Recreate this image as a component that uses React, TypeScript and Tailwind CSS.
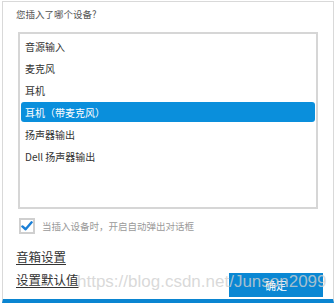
import React from "react";

const devices = ["音源输入", "麦克风", "耳机", "耳机（带麦克风）", "扬声器输出", "Dell 扬声器输出"];

export default function App() {
  const selected = 3;
  const font = { fontFamily: '"Noto Sans CJK SC", "Liberation Sans", sans-serif' };

  return (
    <div className="relative w-[336px] h-[304px] bg-white overflow-hidden" style={font}>
      <div className="ml-[2px] mt-[1px] w-[332px] h-[302px] border border-[#d9d9d9] border-b-[4px] border-b-[#0a85d1] flex flex-col">
        {/* Title */}
        <div className="mt-[6px] pl-[13px] text-[9.5px] leading-[12px] text-[#555]">您插入了哪个设备?</div>

        {/* Device list */}
        <div className="mt-[12px] ml-[15px] w-[300px] h-[177px] border-2 border-[#d6d6d6] bg-white pt-px">
          {devices.map((d, i) => (
            <div key={d} className="h-[22px] px-px py-px">
              <div
                className={
                  i === selected
                    ? "h-full rounded-[3px] bg-[#0a8fdc] text-white flex items-center pl-[4px] text-[10px]"
                    : "h-full flex items-center pl-[4px] text-[10px] text-[#333]"
                }
              >
                {d}
              </div>
            </div>
          ))}
        </div>

        {/* Auto popup checkbox */}
        <div className="mt-[9px] ml-[16px] flex items-center gap-[7px]">
          <div className="w-[16px] h-[16px] border-2 border-[#cfcfcf] bg-white flex items-center justify-center">
            <svg width="13" height="12" viewBox="0 0 13 12">
              <path d="M1.5 6.5 L5 9.5 L11.5 2" fill="none" stroke="#1a7fd6" strokeWidth="2.6" strokeLinecap="round" strokeLinejoin="round" />
            </svg>
          </div>
          <span className="text-[9.5px] text-[#9a9a9a] leading-[12px]">当插入设备时，开启自动弹出对话框</span>
        </div>

        {/* Links */}
        <div className="mt-[15px] ml-[13px] text-[12.5px] leading-[16px] text-[#333] underline underline-offset-2">音箱设置</div>
        <div className="mt-[7px] flex items-start justify-between pl-[13px] pr-[10px]">
          <span className="text-[12.5px] leading-[16px] text-[#333] underline underline-offset-2">设置默认值</span>
          <button className="mt-px w-[94px] h-[24px] bg-[#0a87d3] text-white text-[11px]">确定</button>
        </div>
      </div>

      {/* Watermark */}
      <div
        className="absolute left-[77px] top-[271px] text-[17px] leading-[22px] text-[#cfcfcf]/80 whitespace-nowrap pointer-events-none"
        style={{ fontFamily: '"Liberation Sans", sans-serif' }}
      >
        https://blog.csdn.net/Junson2099
      </div>
    </div>
  );
}
